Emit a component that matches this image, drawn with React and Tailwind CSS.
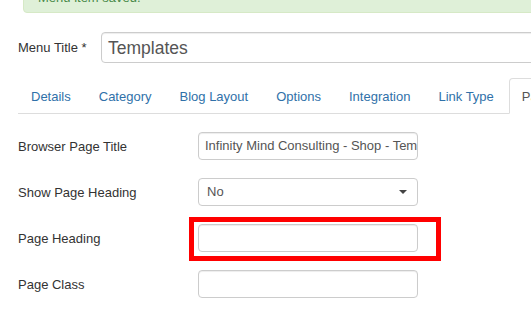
const tabs = ['Details', 'Category', 'Blog Layout', 'Options', 'Integration', 'Link Type'];

const TextControl = ({ value }) => (
  <div className="w-[220px] h-[28px] shrink-0 border border-[#cccccc] rounded-[4px] bg-white px-[6px] flex items-center overflow-hidden whitespace-nowrap text-[#555] shadow-[inset_0_1px_1px_rgba(0,0,0,0.075)]">
    {value}
  </div>
);

const Row = ({ label, children }) => (
  <div className="flex items-center mb-[18px]">
    <label className="w-[180px] shrink-0 pt-[2px]">{label}</label>
    {children}
  </div>
);

export default function App() {
  return (
    <div
      className="relative w-[531px] h-[330px] overflow-hidden bg-white text-[13px] leading-[18px] text-[#333]"
      style={{ fontFamily: '"Liberation Sans", Arial, sans-serif' }}
    >
      {/* saved message, mostly scrolled off */}
      <div className="ml-[23px] mt-[-12px] w-[600px] border border-[#d6e9c6] bg-[#dff0d8] text-[#468847] rounded-[4px] pl-[14px] pb-[5px]">
        Menu item saved.
      </div>

      <div className="flex items-center mt-[19px] pl-[18px]">
        <label className="w-[83px] shrink-0">Menu Title *</label>
        <div className="w-[500px] h-[31px] shrink-0 border border-[#cccccc] rounded-[4px] px-[6px] flex items-center text-[17.5px] text-[#555] shadow-[inset_0_1px_1px_rgba(0,0,0,0.075)]">
          Templates
        </div>
      </div>

      <div className="mt-[15px] ml-[18px] w-[600px] flex border-b border-[#dddddd]">
        {tabs.map((t) => (
          <a key={t} className="mr-[2px] -mb-px px-[12px] pt-[9px] pb-[7px] border border-transparent rounded-t-[4px] whitespace-nowrap text-[#3071a9]">
            {t}
          </a>
        ))}
        <a className="mr-[2px] -mb-px px-[12px] pt-[9px] pb-[7px] border border-[#dddddd] border-b-transparent rounded-t-[4px] bg-white whitespace-nowrap text-[#555]">
          Page Display
        </a>
      </div>

      <div className="mt-[18px] pl-[18px]">
        <Row label="Browser Page Title">
          <TextControl value="Infinity Mind Consulting - Shop - Templates" />
        </Row>
        <Row label="Show Page Heading">
          <div className="w-[220px] h-[28px] shrink-0 border border-[#cccccc] rounded-[4px] bg-white pl-[8px] pr-[10px] flex items-center justify-between text-[#555]">
            <span>No</span>
            <span className="w-0 h-0 border-x-[4px] border-t-[4px] border-x-transparent border-t-[#444]" />
          </div>
        </Row>
        <Row label="Page Heading">
          <TextControl value="" />
        </Row>
        <Row label="Page Class">
          <TextControl value="" />
        </Row>
      </div>

      {/* red annotation box */}
      <div className="absolute left-[189px] top-[217px] w-[252px] h-[44px] border-[5px] border-[#ff0000]" />
    </div>
  );
}
